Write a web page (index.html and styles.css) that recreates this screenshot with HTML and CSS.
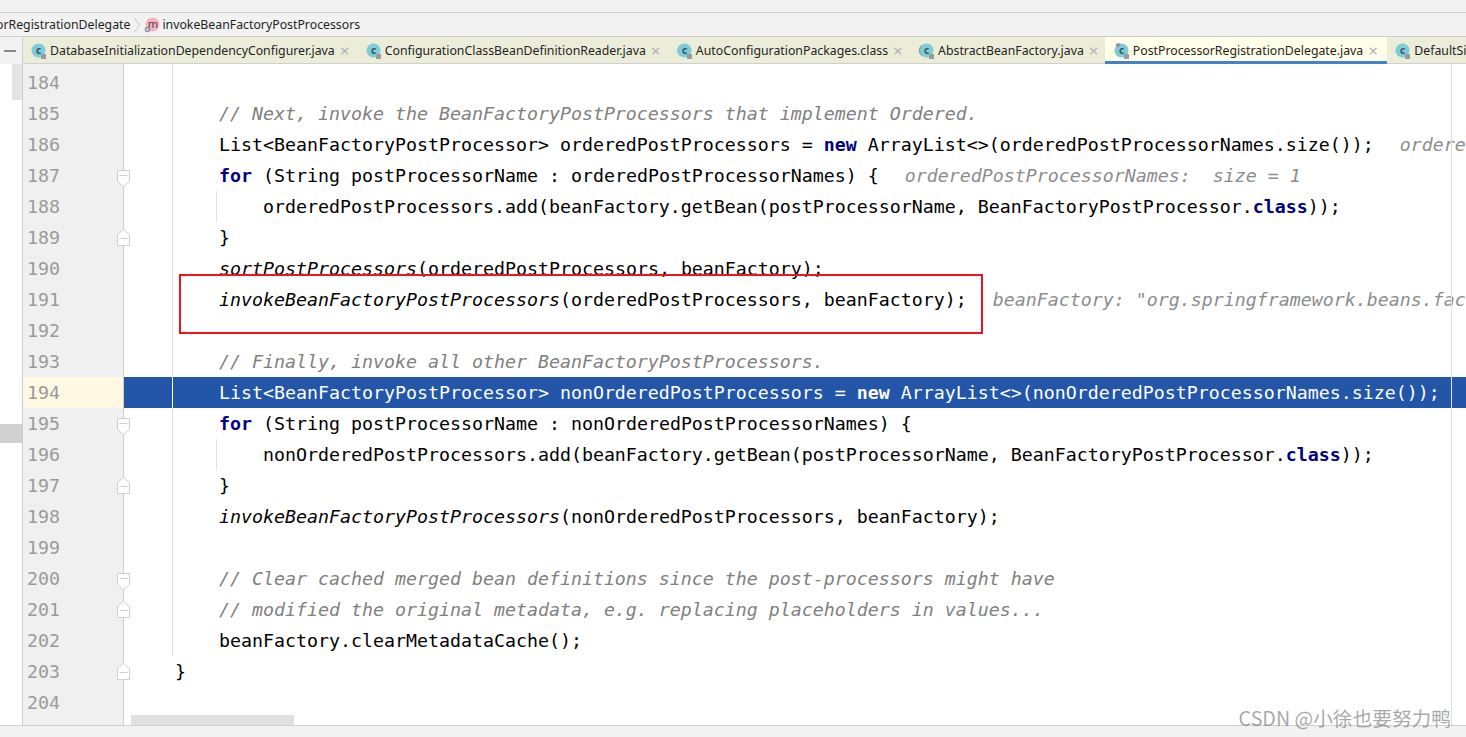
FILE: index.html
```html
<!DOCTYPE html>
<html lang="en">
<head>
<meta charset="utf-8">
<title>PostProcessorRegistrationDelegate.java</title>
<link rel="stylesheet" href="styles.css">
</head>
<body>
<div class="app">
  <div class="topbar"></div>
  <nav class="crumbs">
    <span class="crumb-clip">orRegistrationDelegate</span>
    <svg class="chev" width="6" height="16" viewBox="0 0 6 16"><path d="M.5 1l5 7-5 7" fill="none" stroke="#c8c8c8"/></svg>
    <svg class="ico" width="16" height="16" viewBox="0 0 16 16"><circle cx="8.5" cy="7.5" r="7" fill="#f5b4c1"/><text x="8.8" y="10.5" text-anchor="middle" class="ico-m">m</text><circle cx="3.5" cy="12.5" r="2" fill="none" stroke="#8a949c" stroke-width="1.6"/></svg>
    <span class="crumb">invokeBeanFactoryPostProcessors</span>
  </nav>
  <div class="tabs">
    <div class="tab-tool"><span class="dash"></span></div>
    <div class="tab"><svg class="cico" width="16" height="16" viewBox="0 0 16 16"><use href="#cls"/></svg><span class="tab-name">DatabaseInitializationDependencyConfigurer.java</span><span class="x">×</span></div>
    <div class="tab"><svg class="cico" width="16" height="16" viewBox="0 0 16 16"><use href="#cls"/></svg><span class="tab-name">ConfigurationClassBeanDefinitionReader.java</span><span class="x">×</span></div>
    <div class="tab"><svg class="cico" width="16" height="16" viewBox="0 0 16 16"><path d="M2 2.5a7 7 0 0 0 0 10" fill="none" stroke="#8a8a8a"/><use href="#cls"/></svg><span class="tab-name">AutoConfigurationPackages.class</span><span class="x">×</span></div>
    <div class="tab"><svg class="cico" width="16" height="16" viewBox="0 0 16 16"><use href="#cls"/><path d="M1.5 2.5a7 7 0 0 0 0 10" fill="none" stroke="#8a8a8a"/></svg><span class="tab-name">AbstractBeanFactory.java</span><span class="x">×</span></div>
    <div class="tab active"><svg class="cico" width="16" height="16" viewBox="0 0 16 16"><use href="#cls"/><path d="M.5 1.5l3-1.5 2 1.5-3 3z" fill="#8f8f8f"/></svg><span class="tab-name">PostProcessorRegistrationDelegate.java</span><span class="x">×</span></div>
    <div class="tab"><svg class="cico" width="16" height="16" viewBox="0 0 16 16"><use href="#cls"/></svg><span class="tab-name">DefaultSingletonBeanRegistry.java</span></div>
  </div>
  <svg class="defs" width="0" height="0"><defs><g id="cls"><circle cx="6.5" cy="7.5" r="7" fill="#7fcbd8"/><text x="6.5" y="10.5" text-anchor="middle" class="ico-c">c</text><rect x="9" y="11" width="5" height="5" fill="#9b9b9b"/></g>
  <g id="foldtop"><path d="M.5.5h12v11l-6 5-6-5z" fill="#fff" stroke="#cfcfcf"/><path d="M2.5 5.5h8" stroke="#cfcfcf"/></g>
  <g id="foldbot"><path d="M.5 16.5h12v-11l-6-5-6 5z" fill="#fff" stroke="#cfcfcf"/><path d="M2.5 9.5h8" stroke="#cfcfcf"/></g></defs></svg>
  <main class="editor">
    <div class="strip"><span class="thumb-a"></span><span class="thumb-b"></span></div>
    <div class="lines">
      <div class="line top"><span class="num"></span><span class="fold"></span><span class="code guide"></span></div>
      <div class="line"><span class="num">184</span><span class="fold"></span><span class="code guide"></span></div>
      <div class="line"><span class="num">185</span><span class="fold"></span><span class="code guide"><span class="cm">    // Next, invoke the BeanFactoryPostProcessors that implement Ordered.</span></span></div>
      <div class="line"><span class="num">186</span><span class="fold"></span><span class="code guide">    List&lt;BeanFactoryPostProcessor&gt; orderedPostProcessors = <b class="kw">new</b> ArrayList&lt;&gt;(orderedPostProcessorNames.size());<span class="hint">orderedPostProcessors:  size = 0</span></span></div>
      <div class="line"><span class="num">187</span><span class="fold"><svg class="fm fm-top" width="13" height="17" viewBox="0 0 13 17"><use href="#foldtop"/></svg></span><span class="code guide">    <b class="kw">for</b> (String postProcessorName : orderedPostProcessorNames) {<span class="hint">orderedPostProcessorNames:  size = 1</span></span></div>
      <div class="line"><span class="num">188</span><span class="fold"></span><span class="code guide"><span class="ig"></span>        orderedPostProcessors.add(beanFactory.getBean(postProcessorName, BeanFactoryPostProcessor.<b class="kw">class</b>));</span></div>
      <div class="line"><span class="num">189</span><span class="fold"><svg class="fm" width="13" height="17" viewBox="0 0 13 17"><use href="#foldbot"/></svg></span><span class="code guide">    }</span></div>
      <div class="line"><span class="num">190</span><span class="fold"></span><span class="code guide">    <i>sortPostProcessors</i>(orderedPostProcessors, beanFactory);</span></div>
      <div class="line"><span class="num">191</span><span class="fold"></span><span class="code guide">    <i>invokeBeanFactoryPostProcessors</i>(orderedPostProcessors, beanFactory);<span class="hint">beanFactory: "org.springframework.beans.factory.support.DefaultListableBeanFactory"</span></span></div>
      <div class="line"><span class="num">192</span><span class="fold"></span><span class="code guide"></span></div>
      <div class="line"><span class="num">193</span><span class="fold"></span><span class="code guide"><span class="cm">    // Finally, invoke all other BeanFactoryPostProcessors.</span></span></div>
      <div class="line current"><span class="num">194</span><span class="fold"></span><span class="code guide">    List&lt;BeanFactoryPostProcessor&gt; nonOrderedPostProcessors = <b>new</b> ArrayList&lt;&gt;(nonOrderedPostProcessorNames.size());</span></div>
      <div class="line"><span class="num">195</span><span class="fold"><svg class="fm fm-top" width="13" height="17" viewBox="0 0 13 17"><use href="#foldtop"/></svg></span><span class="code guide">    <b class="kw">for</b> (String postProcessorName : nonOrderedPostProcessorNames) {</span></div>
      <div class="line"><span class="num">196</span><span class="fold"></span><span class="code guide"><span class="ig"></span>        nonOrderedPostProcessors.add(beanFactory.getBean(postProcessorName, BeanFactoryPostProcessor.<b class="kw">class</b>));</span></div>
      <div class="line"><span class="num">197</span><span class="fold"><svg class="fm" width="13" height="17" viewBox="0 0 13 17"><use href="#foldbot"/></svg></span><span class="code guide">    }</span></div>
      <div class="line"><span class="num">198</span><span class="fold"></span><span class="code guide">    <i>invokeBeanFactoryPostProcessors</i>(nonOrderedPostProcessors, beanFactory);</span></div>
      <div class="line"><span class="num">199</span><span class="fold"></span><span class="code guide"></span></div>
      <div class="line"><span class="num">200</span><span class="fold"><svg class="fm fm-top" width="13" height="17" viewBox="0 0 13 17"><use href="#foldtop"/></svg></span><span class="code guide"><span class="cm">    // Clear cached merged bean definitions since the post-processors might have</span></span></div>
      <div class="line"><span class="num">201</span><span class="fold"><svg class="fm" width="13" height="17" viewBox="0 0 13 17"><use href="#foldbot"/></svg></span><span class="code guide"><span class="cm">    // modified the original metadata, e.g. replacing placeholders in values...</span></span></div>
      <div class="line"><span class="num">202</span><span class="fold"></span><span class="code guide">    beanFactory.clearMetadataCache();</span></div>
      <div class="line"><span class="num">203</span><span class="fold"><svg class="fm" width="13" height="17" viewBox="0 0 13 17"><use href="#foldbot"/></svg></span><span class="code">}</span></div>
      <div class="line"><span class="num">204</span><span class="fold"></span><span class="code"></span></div>
      <div class="line rest"><span class="num"></span><span class="fold"></span><span class="code"></span></div>
    </div>
    <span class="margin"></span>
    <span class="hscroll"></span>
    <span class="redbox"></span>
  </main>
  <footer class="status"></footer>
  <span class="watermark">CSDN @小徐也要努力鸭</span>
</div>
</body>
</html>
```
FILE: styles.css
```css
* { box-sizing: border-box; }
html, body { margin: 0; height: 100%; overflow: hidden; background: #fff; }
.app { position: relative; height: 737px; display: flex; flex-direction: column; font-family: "Noto Sans", "Liberation Sans", sans-serif; }
.defs { position: absolute; }

.topbar { height: 13px; flex: none; background: #f2f2f2; border-bottom: 1px solid #cdcdcd; }

.crumbs { height: 24px; flex: none; display: flex; align-items: center; background: #f2f2f2; border-bottom: 1px solid #cdcdcd; font-size: 12.3px; color: #1f1f1f; white-space: nowrap; overflow: hidden; }
.crumb-clip { margin-left: -4px; }
.chev { margin: 0 4px 0 4px; }
.ico { margin-right: 2px; }
.ico-m { font: 11px "Noto Sans", sans-serif; fill: #5c3a40; }
.ico-c { font: bold 10px "Noto Sans", sans-serif; fill: #2f5560; }

.tabs { height: 27px; flex: none; display: flex; background: #ecedd9; overflow: hidden; white-space: nowrap; box-shadow: inset 0 -1px #d0d0d0; }
.tab-tool { width: 23px; flex: none; background: #f2f2f2; border-right: 1px solid #d0d0d0; display: flex; align-items: center; justify-content: center; }
.dash { width: 12px; height: 2px; background: #8a8a8a; margin-left: -2px; }
.tab { flex: none; display: flex; align-items: center; padding-left: 9px; font-size: 12.3px; color: #1f1f1f; }
.tab-name { margin-left: 2px; }
.cico { flex: none; overflow: visible; }
.x { color: #b4b4b4; font-size: 17px; line-height: 1; width: 23px; padding-left: 5px; }
.tab.active { background: #fffee8; box-shadow: inset 0 -3px #4083c9; margin-left: -2px; padding-left: 10px; }
.tab.active .x { width: 24px; }

.editor { flex: 1; position: relative; display: flex; overflow: hidden; min-height: 0; }
.strip { width: 22px; flex: none; position: relative; background: #fff; }
.thumb-a { position: absolute; left: 12px; top: 0; width: 10px; height: 36px; background: #e4e4e4; }
.thumb-b { position: absolute; left: 0; top: 360px; width: 22px; height: 19px; background: #d0d0d0; }

.lines { flex: 1; display: flex; flex-direction: column; min-width: 0; }
.line { height: 31px; flex: none; display: flex; }
.line.top { height: 3px; }
.line.rest { flex: 1; height: auto; }
.num { width: 102px; flex: none; background: #f0f0f0; border-left: 1px solid #cdcdcd; border-right: 1px solid #cdcdcd; color: #9a9a9a; font: 18.27px/31px "DejaVu Sans Mono", monospace; padding-left: 4px; }
.fold { width: 48px; flex: none; position: relative; }
.fm { position: absolute; left: -7px; top: 7px; z-index: 1; }
.fm-top { top: 10px; }
.code { flex: 1; min-width: 0; padding-left: 2px; border-left: 1px solid transparent; font: 18.27px/31px "DejaVu Sans Mono", monospace; color: #000; white-space: pre; overflow: hidden; position: relative; }
.code.guide { border-left-color: #e0e0e0; }
.kw { color: #000080; font-weight: bold; }
.cm { color: #808080; font-style: italic; }
.hint { color: #8c8c8c; font-style: italic; margin-left: 26px; }
.ig { position: absolute; left: 43px; top: 0; height: 31px; width: 1px; background: #e0e0e0; }

.line.current .num { background: #fff8e3; }
.line.current .fold { background: #2355a8; }
.line.current .code { background: #2355a8; color: #fff; border-left-color: #fff; }

.margin { position: absolute; left: 1451px; top: 0; bottom: 0; width: 1px; background: #e0e0e0; }
.hscroll { position: absolute; left: 131px; bottom: 0; width: 163px; height: 10px; background: #e0e0e0; }
.redbox { position: absolute; left: 179px; top: 210px; width: 804px; height: 60px; border: 2px solid #f0141e; }
.watermark { position: absolute; right: 15px; top: 704px; font: 19.7px/28px "Noto Sans CJK SC", sans-serif; color: rgba(110,110,110,.6); white-space: nowrap; }

.status { height: 12px; flex: none; background: #f2f2f2; border-top: 1px solid #d0d0d0; }
```
